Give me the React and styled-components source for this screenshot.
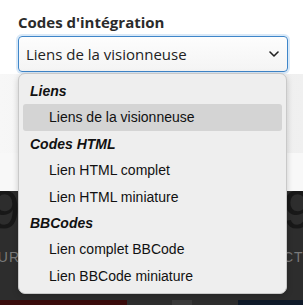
import React from "react";
import styled, { createGlobalStyle } from "styled-components";

const Global = createGlobalStyle`
  html, body { margin: 0; padding: 0; background: #ffffff; }
  body { width: 303px; height: 305px; overflow: hidden; font-family: "Open Sans", "Noto Sans", sans-serif; }
`;

const Page = styled.div`
  position: relative;
  width: 303px;
  height: 305px;
  display: flex;
  flex-direction: column;
`;

const Field = styled.div`
  padding: 12px 15px 1px 18px;
  display: flex;
  flex-direction: column;
  gap: 3px;
`;

const Label = styled.div`
  font-size: 15px;
  font-weight: 700;
  color: #2b2b2b;
  line-height: 21px;
`;

const SelectBox = styled.div`
  box-sizing: border-box;
  width: 270px;
  height: 36px;
  border: 1px solid #3f86c9;
  border-radius: 4px;
  box-shadow: 0 0 0 2px rgba(120, 175, 230, 0.28);
  background: linear-gradient(#fdfdfd, #f4f4f4);
  display: flex;
  align-items: center;
  justify-content: space-between;
  padding: 0 8px 0 7px;
  font-size: 15px;
  color: #222;
`;

const Chevron = () => (
  <svg width="10" height="6" viewBox="0 0 10 6">
    <path d="M1 1 L5 5 L9 1" fill="none" stroke="#222" strokeWidth="1.6" strokeLinecap="round" strokeLinejoin="round" />
  </svg>
);

const GreyBand = styled.div`
  margin-top: 1px;
  height: 79px;
  background: linear-gradient(90deg, #f7f7f7, #ececec 70%, #f0f0f0);
`;

const WhiteBand = styled.div`
  height: 38px;
  background: #f8f8f8;
`;

const DarkSection = styled.div`
  flex: 1;
  background: #2d2d2d;
  display: flex;
  justify-content: space-between;
  overflow: hidden;
`;

const Stat = styled.div`
  display: flex;
  flex-direction: column;
  align-items: ${(p) => (p.$right ? "flex-start" : "flex-end")};
  margin: ${(p) => (p.$right ? "0 -40px 0 0" : "0 0 0 -40px")};
  width: 60px;
`;

const BigNum = styled.div`
  font-family: "Liberation Sans", Arial, sans-serif;
  font-size: 54px;
  line-height: 48px;
  margin-top: -6px;
  color: #181818;
`;

const StatLabel = styled.div`
  margin-top: 16px;
  font-family: "Liberation Sans", Arial, sans-serif;
  font-size: 14px;
  letter-spacing: 1px;
  color: #7a7a7a;
`;

const Stripes = styled.div`
  height: 5px;
  display: flex;
  background: #2d2d2d;
`;

const Stripe = styled.div`
  width: ${(p) => p.$w}px;
  background: ${(p) => p.$c};
  margin-left: ${(p) => p.$ml || 0}px;
`;

const Menu = styled.div`
  position: absolute;
  top: 73px;
  left: 18px;
  width: 269px;
  box-sizing: border-box;
  padding: 4px 4px 4px;
  background: #eeeeee;
  border: 1px solid #c9c9c9;
  border-radius: 7px;
  box-shadow: 0 2px 6px rgba(0, 0, 0, 0.18);
  font-family: "Liberation Sans", Arial, sans-serif;
  font-size: 14px;
  color: #111;
`;

const Group = styled.div`
  height: 26.4px;
  line-height: 26.4px;
  padding-left: 7px;
  font-weight: 700;
  font-style: italic;
`;

const Option = styled.div`
  height: 26.4px;
  line-height: 26.4px;
  padding-left: 26px;
  border-radius: 3px;
  background: ${(p) => (p.$active ? "#d4d4d4" : "transparent")};
`;

const groups = [
  { label: "Liens", options: ["Liens de la visionneuse"] },
  { label: "Codes HTML", options: ["Lien HTML complet", "Lien HTML miniature"] },
  { label: "BBCodes", options: ["Lien complet BBCode", "Lien BBCode miniature"] },
];

export default function App() {
  return (
    <>
      <Global />
      <Page>
        <Field>
          <Label>Codes d'intégration</Label>
          <SelectBox>
            <span>Liens de la visionneuse</span>
            <Chevron />
          </SelectBox>
        </Field>
        <GreyBand />
        <WhiteBand />
        <DarkSection>
          <Stat>
            <BigNum>9</BigNum>
            <StatLabel>JOUR</StatLabel>
          </Stat>
          <Stat $right>
            <BigNum>9</BigNum>
            <StatLabel>CTE</StatLabel>
          </Stat>
        </DarkSection>
        <Stripes>
          <Stripe $w={127} $c="#3a0c0c" />
          <Stripe $w={20} $c="#3a3a3a" $ml={45} />
          <Stripe $w={65} $c="#0f1a29" $ml={46} />
        </Stripes>
        <Menu>
          {groups.map((g) => (
            <React.Fragment key={g.label}>
              <Group>{g.label}</Group>
              {g.options.map((o) => (
                <Option key={o} $active={o === "Liens de la visionneuse"}>
                  {o}
                </Option>
              ))}
            </React.Fragment>
          ))}
        </Menu>
      </Page>
    </>
  );
}
